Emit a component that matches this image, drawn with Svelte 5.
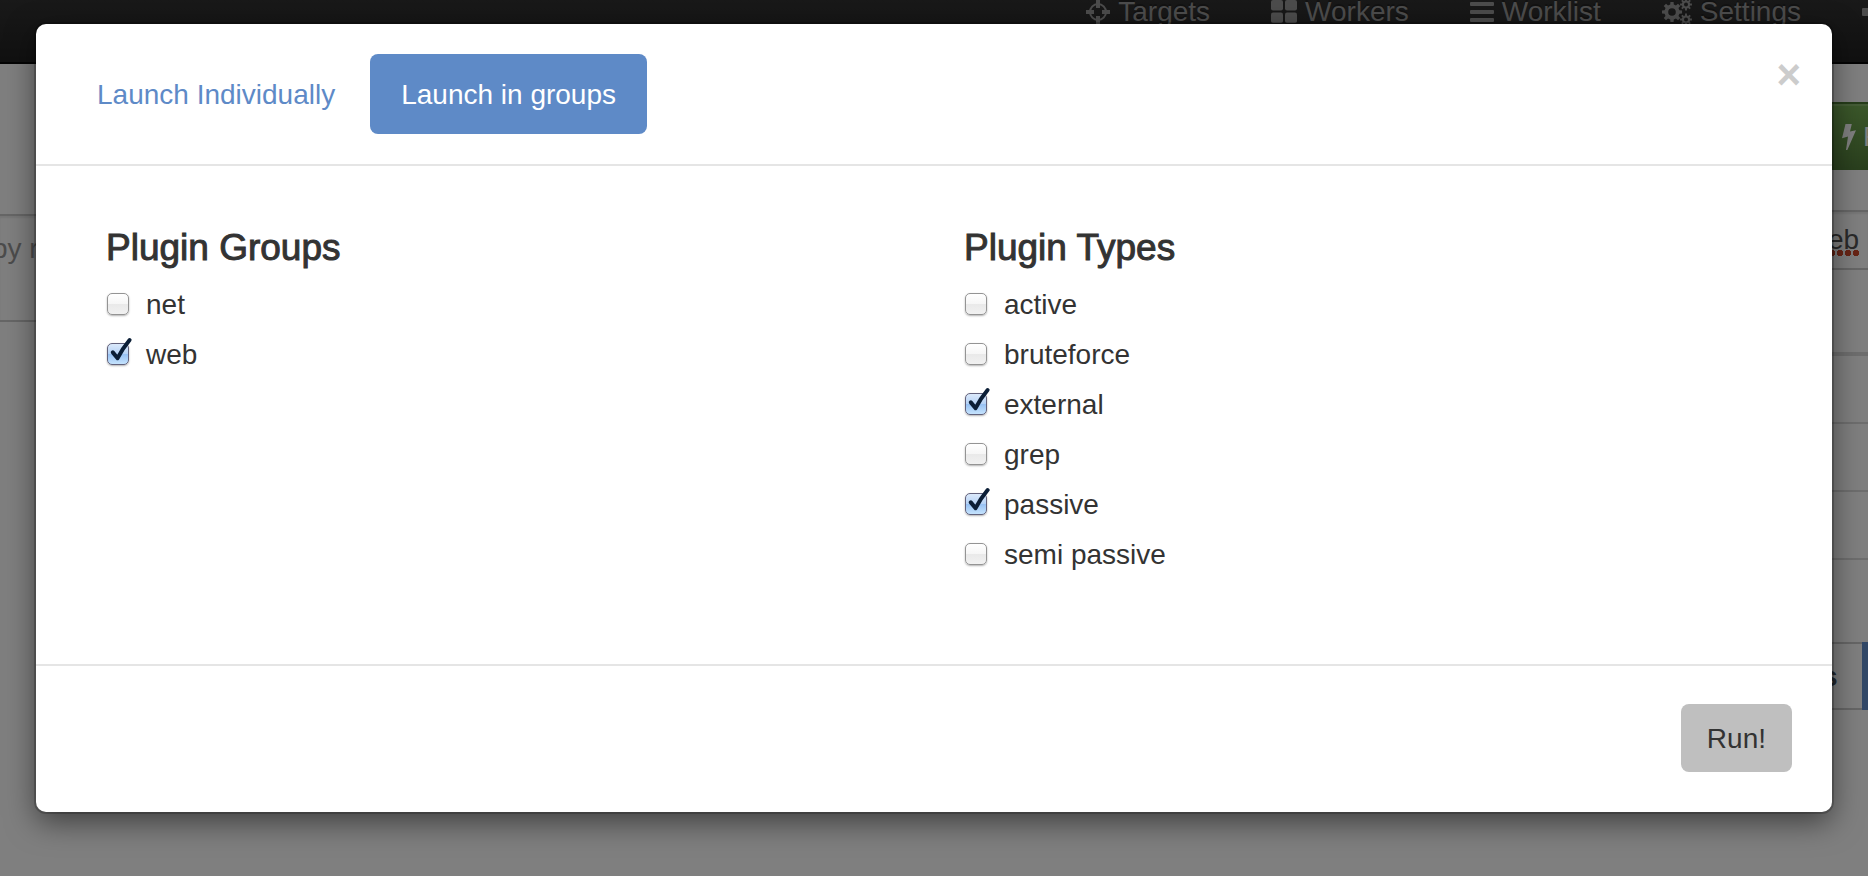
<script>
  let groups = $state([
    { name: 'net', checked: false },
    { name: 'web', checked: true }
  ]);
  let types = $state([
    { name: 'active', checked: false },
    { name: 'bruteforce', checked: false },
    { name: 'external', checked: true },
    { name: 'grep', checked: false },
    { name: 'passive', checked: true },
    { name: 'semi passive', checked: false }
  ]);

  // One toothed ring with a hole, as an SVG path.
  function gear(cx, cy, outer, inner, hole, teeth) {
    const step = (Math.PI * 2) / teeth;
    const at = (r, a) => `${(cx + r * Math.cos(a)).toFixed(2)} ${(cy + r * Math.sin(a)).toFixed(2)}`;
    const points = [];
    for (let i = 0; i < teeth; i++) {
      const a = i * step;
      points.push(at(inner, a - step * 0.3), at(outer, a - step * 0.2), at(outer, a + step * 0.2), at(inner, a + step * 0.3));
    }
    return `M${points.join('L')}Z M${cx - hole} ${cy}a${hole} ${hole} 0 1 0 ${hole * 2} 0a${hole} ${hole} 0 1 0 ${-hole * 2} 0Z`;
  }
</script>

{#snippet options(title, items)}
  <section class="column">
    <h4>{title}</h4>
    <div class="options">
      {#each items as item}
        <label>
          <span class="box">
            <input type="checkbox" bind:checked={item.checked} />
            <svg viewBox="0 0 22 22" width="22" height="22" aria-hidden="true">
              <path d="M5.8 9.4 L10.6 15.2 Q15.5 5.5 22.6 -3" />
            </svg>
          </span>
          {item.name}
        </label>
      {/each}
    </div>
  </section>
{/snippet}

<div class="page">
  <nav>
    <a href="#targets">
      <svg width="24" height="24" viewBox="0 0 24 24">
        <circle cx="12" cy="12" r="8" fill="none" stroke="currentColor" stroke-width="2" />
        <path d="M12 0v8M12 16v8M0 12h8M16 12h8" stroke="currentColor" stroke-width="4" />
      </svg>Targets</a>
    <a href="#workers">
      <svg width="26" height="24" viewBox="0 0 26 24" fill="currentColor">
        <rect x="0" y="0" width="12" height="10.5" rx="2" /><rect x="14" y="0" width="12" height="10.5" rx="2" />
        <rect x="0" y="12.5" width="12" height="10.5" rx="2" /><rect x="14" y="12.5" width="12" height="10.5" rx="2" />
      </svg>Workers</a>
    <a href="#worklist">
      <svg width="24" height="24" viewBox="0 0 24 24" fill="currentColor">
        <rect y="2" width="24" height="4" rx="1" /><rect y="10" width="24" height="4" rx="1" /><rect y="18" width="24" height="4" rx="1" />
      </svg>Worklist</a>
    <a href="#settings">
      <svg width="30" height="24" viewBox="0 0 30 24" fill="currentColor" fill-rule="evenodd">
        <path d={gear(10, 12, 10.2, 7.6, 3.8, 8)} />
        <path d={gear(24, 4.5, 6, 4.2, 2, 8)} />
        <path d={gear(24, 19.5, 6, 4.2, 2, 8)} />
      </svg>Settings</a>
    <a class="cut" href="#more" aria-label="More">
      <svg width="24" height="24" viewBox="0 0 24 24" fill="currentColor"><rect y="8" width="24" height="8" rx="1" /></svg>
    </a>
  </nav>

  <main>
    <div class="left">
      <div class="filter">by r</div>
    </div>
    <div class="right">
      <button class="launch" type="button">
        <svg width="14" height="26" viewBox="0 0 14 26" fill="currentColor">
          <path d="M3.5 0h6.3L8 7.6 14 6.3 5.3 26H4L6 12.6 0 14.3Z" />
        </svg>Run
      </button>
      <div class="search"><span>eb</span></div>
      <div class="row head"></div>
      <div class="row"></div>
      <div class="row"></div>
      <div class="row"></div>
      <div class="row tall"></div>
      <div class="pager"><span>s</span><b></b></div>
    </div>
  </main>

  <div class="backdrop">
    <div class="modal" role="dialog" aria-label="Launch plugins">
      <header>
        <a class="pill" href="#individually">Launch Individually</a>
        <a class="pill active" href="#groups">Launch in groups</a>
        <button class="close" type="button" aria-label="Close">×</button>
      </header>
      <div class="body">
        {@render options('Plugin Groups', groups)}
        {@render options('Plugin Types', types)}
      </div>
      <footer><button class="run" type="button">Run!</button></footer>
    </div>
  </div>
</div>

<style>
  :global(body) {
    margin: 0;
    background: #808080;
  }
  .page,
  .page * {
    box-sizing: border-box;
  }
  .page {
    position: relative;
    min-height: 100vh;
    overflow: hidden;
    background: #fff;
    color: #333;
    font: 28px/40px 'Liberation Sans', Arial, sans-serif;
  }
  a {
    text-decoration: none;
  }
  button {
    border: 0;
    font: inherit;
    cursor: pointer;
  }

  nav {
    display: flex;
    justify-content: flex-end;
    gap: 61px;
    margin-top: -38px;
    padding: 30px 0;
    border-bottom: 2px solid #080808;
    background: linear-gradient(#3c3c3c, #222);
    text-shadow: 0 -2px 0 rgba(0, 0, 0, 0.25);
  }
  nav a {
    display: flex;
    align-items: center;
    gap: 8px;
    color: #999;
  }
  nav .cut {
    width: 6px;
    overflow: hidden;
  }
  nav svg {
    flex: none;
  }

  main {
    display: flex;
    justify-content: space-between;
  }
  .left,
  .right {
    width: 36px;
  }
  .left {
    padding-top: 150px;
  }
  .filter {
    height: 108px;
    padding-top: 13px;
    border: solid #ccc;
    border-width: 2px 0;
    box-shadow: inset 0 2px 2px rgba(0, 0, 0, 0.075);
    color: #999;
    white-space: nowrap;
    text-indent: -8px;
  }
  .right {
    padding-top: 38px;
  }
  .launch {
    display: flex;
    align-items: center;
    gap: 7px;
    width: 100%;
    height: 68px;
    padding: 0 0 0 10px;
    overflow: hidden;
    border-top: 2px solid #4c7a35;
    background: linear-gradient(#77b055, #547f3c);
    box-shadow: inset 0 2px 0 rgba(255, 255, 255, 0.15);
    color: #fff;
  }
  .launch svg {
    flex: none;
  }
  .search {
    height: 60px;
    margin-top: 40px;
    border: solid #ccc;
    border-width: 2px 0;
    box-shadow: inset 0 2px 2px rgba(0, 0, 0, 0.075);
    color: #555;
    line-height: 56px;
  }
  .search span {
    display: inline-block;
    height: 44px;
    margin-left: -4px;
    background: radial-gradient(circle at 4px 3px, #d04a2c 3px, transparent 3px) 0 bottom / 8px 6px repeat-x;
  }
  .row {
    height: 68px;
    border-bottom: 2px solid #ddd;
  }
  .row.head {
    height: 86px;
    border-bottom-width: 4px;
  }
  .row.tall {
    height: 82px;
    border: 0;
  }
  .pager {
    display: flex;
    justify-content: space-between;
    height: 68px;
    border: solid #ccc;
    border-width: 2px 0;
    color: #4a5560;
    font-weight: bold;
    line-height: 66px;
    text-indent: -10px;
  }
  .pager b {
    width: 6px;
    margin: -2px 0;
    background: #6590cf;
  }

  .backdrop {
    position: absolute;
    inset: 0;
    padding: 24px 36px;
    background: rgba(0, 0, 0, 0.5);
  }
  .modal {
    border-radius: 10px;
    background: #fff;
    box-shadow:
      0 0 0 2px rgba(0, 0, 0, 0.2),
      0 10px 30px rgba(0, 0, 0, 0.5);
  }
  header {
    display: flex;
    align-items: flex-start;
    gap: 4px;
    padding: 30px;
    border-bottom: 2px solid #e5e5e5;
  }
  .pill {
    padding: 21px 31px 19px;
    border-radius: 8px;
    color: #5e8ac7;
  }
  .pill.active {
    background: #5e8ac7;
    color: #fff;
  }
  .close {
    margin-left: auto;
    padding: 1px 1px 0 0;
    background: none;
    color: #ccc;
    font-size: 42px;
    font-weight: bold;
  }
  .body {
    display: grid;
    grid-template-columns: 1fr 1fr;
    padding: 62px 40px 88px;
  }
  .column {
    padding: 0 30px;
  }
  h4 {
    margin: 0 0 16px;
    font-size: 37px;
    font-weight: 400;
    -webkit-text-stroke: 1px #333;
  }
  .options {
    display: flex;
    flex-direction: column;
    align-items: flex-start;
    gap: 8px;
  }
  label {
    display: flex;
    align-items: center;
    gap: 17px;
    line-height: 42px;
  }
  .box {
    position: relative;
    width: 22px;
    height: 22px;
    margin: 0 0 2px 1px;
  }
  input {
    display: block;
    width: 22px;
    height: 22px;
    margin: 0;
    appearance: none;
    border: 1px solid #949494;
    border-radius: 5px;
    background: linear-gradient(#fff, #f6f6f6 50%, #e9e9e9 51%, #f1f1f1);
    box-shadow: 0 1px 2px rgba(0, 0, 0, 0.3);
  }
  input:checked {
    border-color: #62627c;
    background: linear-gradient(#dbe9fb, #b5d2f6 50%, #97c1f3 51%, #c5e3fd);
  }
  .box svg {
    position: absolute;
    inset: 0;
    display: none;
    overflow: visible;
    pointer-events: none;
  }
  .box svg path {
    fill: none;
    stroke: #0b1e36;
    stroke-width: 4;
    stroke-linecap: round;
    stroke-linejoin: round;
  }
  input:checked + svg {
    display: block;
  }
  footer {
    display: flex;
    justify-content: flex-end;
    padding: 38px 40px 40px;
    border-top: 2px solid #e5e5e5;
  }
  .run {
    padding: 15px 26px 13px;
    border-radius: 8px;
    background: #bfbfbf;
    color: #333;
  }
</style>
